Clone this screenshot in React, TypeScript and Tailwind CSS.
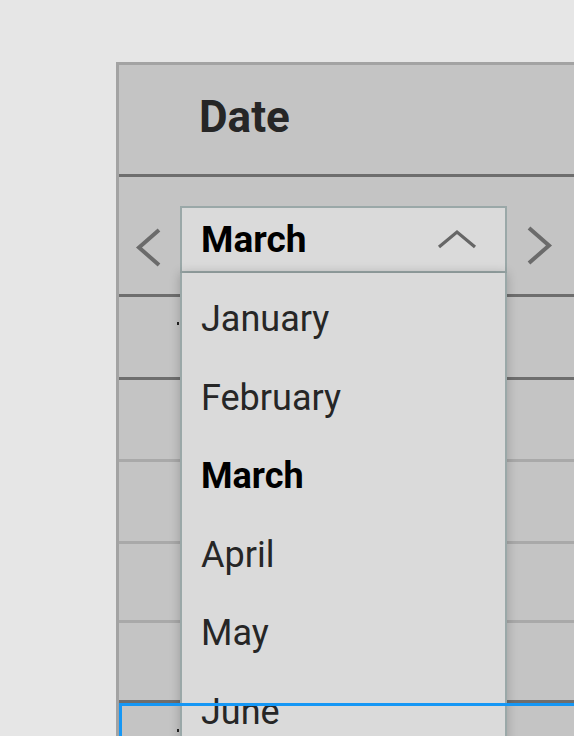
const MONTHS = ['January', 'February', 'March', 'April', 'May', 'June'];
const SELECTED = 'March';

function Chevron({ dir }: { dir: 'left' | 'right' | 'up' }) {
  if (dir === 'up') {
    return (
      <svg width="40" height="22" viewBox="0 0 40 22" className="shrink-0">
        <polyline points="2,18 20,3 38,18" fill="none" stroke="#666666" strokeWidth="3.2" />
      </svg>
    );
  }
  return (
    <svg width="28" height="40" viewBox="0 0 28 40" className="shrink-0">
      <polyline
        points={dir === 'left' ? '24,2 4,19.5 24,37' : '4,2 24,19.5 4,37'}
        fill="none"
        stroke="#6b6b6b"
        strokeWidth="4"
      />
    </svg>
  );
}

function Row({ h, dot }: { h: string; dot?: boolean }) {
  return (
    <div className={`${h} relative`}>
      {dot && <div className="absolute left-[58px] top-[25px] h-[3px] w-[2px] bg-[#222]" />}
    </div>
  );
}

export default function App() {
  return (
    <div
      className="h-[736px] w-[574px] overflow-hidden bg-[#e6e6e6] pl-[116px] pt-[62px]"
      style={{ fontFamily: 'Roboto, "Liberation Sans", sans-serif' }}
    >
      <div className="relative w-[480px] border-l-[3px] border-t-[3px] border-[#a3a3a3] bg-[#c4c4c4]">
        <div className="h-[109px] pl-[80px] pt-[27px]">
          <h1 className="text-[44px] font-bold leading-[1.172] text-[#262626]">Date</h1>
        </div>
        <div className="h-[3px] bg-[#6e6e6e]" />

        <div className="flex h-[117px] items-start pt-[29px]">
          <div className="ml-[16px] mt-[22px] w-[27px]">
            <Chevron dir="left" />
          </div>
          <div className="ml-[18px] flex h-[67px] w-[327px] items-center justify-between border-2 border-[#9aa8a8] bg-[#dadada] pl-[19px] pr-[28px]">
            <span className="text-[37px] font-bold leading-none text-black">{SELECTED}</span>
            <Chevron dir="up" />
          </div>
          <div className="ml-[18px] mt-[20px]">
            <Chevron dir="right" />
          </div>
        </div>

        <div className="h-[3px] bg-[#6e6e6e]" />
        <Row h="h-[80px]" dot />
        <div className="h-[3px] bg-[#6e6e6e]" />
        <Row h="h-[79px]" />
        <div className="h-[3px] bg-[#a9a9a9]" />
        <Row h="h-[79px]" />
        <div className="h-[3px] bg-[#a9a9a9]" />
        <Row h="h-[76px]" />
        <div className="h-[3px] bg-[#a9a9a9]" />
        <Row h="h-[77px]" />
        <div className="h-[3px] bg-[#6e6e6e]" />
        <div className="relative z-10 h-[60px] border-l-[3px] border-t-[3px] border-[#1597f5]">
          <div className="absolute left-[55px] top-[23px] h-[3px] w-[2px] bg-[#222]" />
        </div>

        <ul className="absolute left-[61px] top-[208px] h-[500px] w-[327px] border-x-2 border-[#9aa8a8] bg-[#dadada] shadow-[0_0_10px_rgba(0,0,0,0.22)]">
          {MONTHS.map((m) => (
            <li
              key={m}
              className={`h-[78.5px] pl-[19px] pt-[25px] text-[36px] leading-[42px] ${
                m === SELECTED ? 'font-bold text-black' : 'text-[#262626]'
              }`}
            >
              {m}
            </li>
          ))}
        </ul>
      </div>
    </div>
  );
}
